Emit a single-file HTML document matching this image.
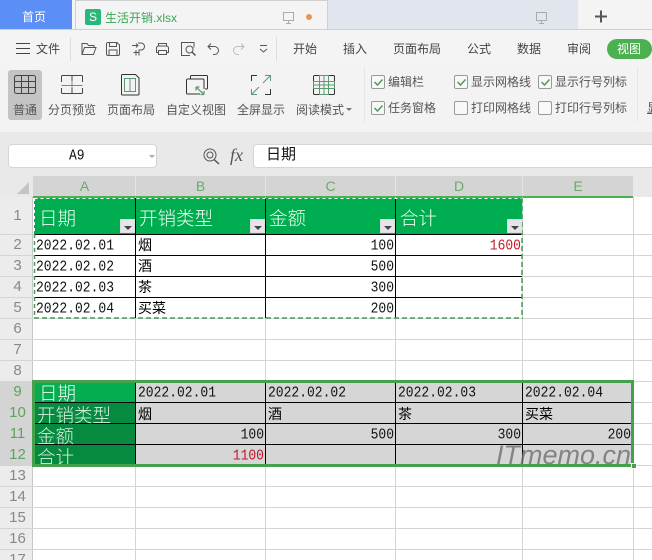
<!DOCTYPE html>
<html><head><meta charset="utf-8">
<style>
*{box-sizing:border-box;margin:0;padding:0}
html,body{width:652px;height:560px;overflow:hidden;background:#fff}
body{position:relative;font-family:"Liberation Sans","Noto Sans CJK SC",sans-serif}
.a{position:absolute}
.t{position:absolute;white-space:nowrap;font-size:12px;line-height:16px;color:#555}
.c{position:absolute;white-space:nowrap;font-family:"Liberation Mono","Noto Serif CJK SC",monospace;font-size:13px;line-height:18px;color:#111;transform:scaleY(1.15)}
.cj{font-size:14px;font-family:"Noto Sans CJK SC",sans-serif;font-weight:400;line-height:18px;color:#000;transform:none}
.r{text-align:right}
.h{position:absolute;white-space:nowrap;font-family:"Noto Sans CJK SC",sans-serif;font-weight:300;font-size:18.500px;line-height:22px;color:#f0fff4}
.col{position:absolute;top:178px;font-size:14px;line-height:16px;color:#6aa96a;text-align:center;padding-left:1px}
.row{position:absolute;left:0;width:33px;text-align:center;padding-left:2px;font-size:15px;line-height:18px;color:#888}
.g{color:#5aa55a}
.cb{position:absolute;width:14px;height:14px;border:1px solid #999;border-radius:2px;background:#f8f8f8}
.f{position:absolute;width:15px;height:14px;background:#e4e4ea;border:1px solid #ddd}
.f:after{content:"";position:absolute;left:3px;top:6px;border:4px solid transparent;border-top:4px solid #444;border-bottom:0}
svg{position:absolute;overflow:visible}
</style></head><body>

<!-- tab bar -->
<div class="a" style="left:0;top:0;width:652px;height:30px;background:#e1e5ee"></div>
<div class="a" style="left:0;top:0;width:72px;height:30px;background:#5b8ff5"></div>
<div class="a" style="left:72px;top:0;width:3px;height:30px;background:#f4f4f4"></div>
<div class="t" style="left:22px;top:9px;color:#fff;font-size:12px">首页</div>
<div class="a" style="left:75px;top:0;width:253px;height:30px;background:#f4f4f4;border:1px solid #cfcfcf;border-bottom:0"></div>
<div class="a" style="left:85px;top:9px;width:16px;height:16px;background:#2bb77c;border-radius:2px;color:#fff;font-size:12px;line-height:16px;text-align:center">S</div>
<div class="t" style="left:105px;top:10px;color:#3aa655;font-size:12px">生活开销.xlsx</div>
<svg style="left:282px;top:11px" width="16" height="14" fill="none" stroke="#aaa" stroke-width="1"><rect x="1.5" y="1.5" width="10" height="8"/><path d="M6.500 9.500v2.500M4 12.500h5"/></svg>
<div class="a" style="left:306px;top:14px;width:6px;height:6px;border-radius:50%;background:#e8984e"></div>
<div class="a" style="left:578px;top:0;width:74px;height:30px;background:#f4f4f4"></div>
<svg style="left:535px;top:11px" width="16" height="14" fill="none" stroke="#aaa" stroke-width="1"><rect x="1.500" y="1.500" width="10" height="8"/><path d="M6.500 9.500v2.500M4 12.500h5"/></svg>
<svg style="left:595px;top:10px" width="13" height="13" stroke="#555" stroke-width="2"><path d="M0 6.500h12M6 .5v12"/></svg>

<!-- menu row + ribbon -->
<div class="a" style="left:0;top:29px;width:652px;height:38px;background:#f4f4f4;border-top:1px solid #cfcfd4"></div>
<div class="a" style="left:0;top:67px;width:652px;height:65px;background:#f3f3f3"></div>
<svg style="left:16px;top:43px" width="14" height="11" stroke="#444" stroke-width="1"><path d="M0 .500h14M0 5.500h14M0 10.500h14"/></svg>
<div class="t" style="left:36px;top:41px;color:#444">文件</div>
<div class="a" style="left:70px;top:37px;width:1px;height:24px;background:#ddd"></div>
<svg style="left:81px;top:42px" width="16" height="14" fill="none" stroke="#555"><path d="M1 12.500V1.500h5l1.500 2H13v2M1 12.500l2.500-7H15l-2.500 7z"/></svg>
<svg style="left:106px;top:42px" width="14" height="14" fill="none" stroke="#555"><path d="M.5 2a1.500 1.500 0 0 1 1.500-1.500h9l2.500 2.500v9a1.500 1.500 0 0 1-1.500 1.500H2A1.500 1.500 0 0 1 .5 12zM3.500 1v3.500h7V1M3 13.500V8h8v5.500"/></svg>
<svg style="left:131px;top:42px" width="15" height="14" fill="none" stroke="#555"><path d="M1 3.500h5M5 1.500l2 2-2 2M7 1h3a3.500 3.500 0 0 1 0 7H8v5.500M5 8v5.500M2.500 10.500h5"/></svg>
<svg style="left:155px;top:42px" width="15" height="14" fill="none" stroke="#555"><path d="M3.500 4V1.500h8V4M3.500 10.500H1.500V6a2 2 0 0 1 2-2h8a2 2 0 0 1 2 2v4.500h-2M3.500 8.500h8v4h-8z"/></svg>
<svg style="left:181px;top:42px" width="16" height="14" fill="none" stroke="#555"><path d="M9 13.500H.5V.5H13v5"/><circle cx="8.500" cy="7.500" r="3.500"/><path d="M11 10l3.500 3.500" stroke-width="1.500"/></svg>
<svg style="left:207px;top:43px" width="13" height="12" fill="none" stroke="#555"><path d="M4 .5L1 3.500l3 3M1 3.500h6.500a4 4 0 0 1 0 8H6"/></svg>
<svg style="left:232px;top:43px" width="13" height="12" fill="none" stroke="#bbb"><path d="M9 .5l3 3-3 3M12 3.500H5.500a4 4 0 0 0 0 8H7"/></svg>
<svg style="left:259px;top:45px" width="9" height="9" fill="none" stroke="#555"><path d="M1 .500h7M1 4l3.500 3L8 4"/></svg>
<div class="a" style="left:276px;top:37px;width:1px;height:24px;background:#ddd"></div>
<div class="t" style="left:293px;top:41px;color:#444">开始</div>
<div class="t" style="left:343px;top:41px;color:#444">插入</div>
<div class="t" style="left:393px;top:41px;color:#444">页面布局</div>
<div class="t" style="left:467px;top:41px;color:#444">公式</div>
<div class="t" style="left:517px;top:41px;color:#444">数据</div>
<div class="t" style="left:567px;top:41px;color:#444">审阅</div>
<div class="a" style="left:607px;top:39px;width:45px;height:20px;border-radius:10px;background:#4caf50"></div>
<div class="t" style="left:617px;top:41px;color:#fff">视图</div>

<!-- ribbon items -->
<div class="a" style="left:8px;top:70px;width:34px;height:50px;border-radius:3px;background:#c4c4c4"></div>
<svg style="left:14px;top:75px" width="22" height="20" fill="none" stroke="#444"><rect x=".5" y=".5" width="21" height="18" rx="2"/><path d="M.5 6.500h21M.5 12.500h21M7.500 .5v18M14.500 .5v18"/></svg>
<div class="t" style="left:13px;top:102px;color:#555">普通</div>
<svg style="left:61px;top:75px" width="22" height="19" fill="none" stroke="#444"><path d="M.5 7V1.500a1 1 0 0 1 1-1h19a1 1 0 0 1 1 1V7M.5 13v4.500a1 1 0 0 0 1 1h19a1 1 0 0 0 1-1V13M11 .5v6M11 13v5.500"/><path d="M.5 10.500h21M11 7v6" stroke="#5d9a72"/></svg>
<div class="t" style="left:48px;top:102px">分页预览</div>
<svg style="left:121px;top:74px" width="19" height="22" fill="none" stroke="#333"><path d="M.5 1.500a1 1 0 0 1 1-1h13l3.500 3.500v16a1 1 0 0 1-1 1h-15.500a1 1 0 0 1-1-1z"/><path d="M3.500 4.500h11v13h-11zM9 4.500v13" stroke="#5d9a72"/></svg>
<div class="t" style="left:107px;top:102px">页面布局</div>
<svg style="left:186px;top:75px" width="22" height="21" fill="none" stroke="#333"><path d="M4.500 4V1.500a1 1 0 0 1 1-1h15a1 1 0 0 1 1 1V13a1 1 0 0 1-1 1h-1.500"/><path d="M14 19H1.500a1 1 0 0 1-1-1V5a1 1 0 0 1 1-1H17a1 1 0 0 1 1 1v9"/><path d="M10 12l8 7.500M10 12h3.500M10 12v3.500M18 19.500h-3.500M18 19.500V16" stroke="#5d9a72" stroke-width="1.200"/></svg>
<div class="t" style="left:166px;top:102px">自定义视图</div>
<svg style="left:251px;top:75px" width="20" height="20" fill="none"><path d="M.5 6V.5H6M14 19.500h5.500V14" stroke="#333"/><path d="M14 .5h5.500V6M19.500 .5L12 8M1 19l7-7M.5 14v5.500H6" stroke="#5d9a72"/></svg>
<div class="t" style="left:237px;top:102px">全屏显示</div>
<svg style="left:313px;top:75px" width="22" height="20" fill="none" stroke="#333"><path d="M6 .5H1.500a1 1 0 0 0-1 1V6M16 .5h4.500a1 1 0 0 1 1 1V6M6 19.500H1.500a1 1 0 0 1-1-1V14M16 19.500h4.500a1 1 0 0 0 1-1V14"/><path d="M6.500 .5h9v19h-9zM11 .5v19M.5 6.500h21v7H.5zM.5 10h21" stroke="#5d9a72"/></svg>
<div class="t" style="left:296px;top:102px">阅读模式</div>
<div class="a" style="left:346px;top:108px;border:3px solid transparent;border-top:3px solid #777;border-bottom:0"></div>

<div class="a" style="left:364px;top:67px;width:1px;height:55px;background:#e6e6e6"></div>
<div class="cb" style="left:371px;top:75px"></div><svg style="left:374px;top:79px" width="9" height="7" fill="none" stroke="#4d9a63" stroke-width="1.500"><path d="M.5 3l3 3L8.500 .5"/></svg>
<div class="t" style="left:388px;top:74px">编辑栏</div>
<div class="cb" style="left:371px;top:101px"></div><svg style="left:374px;top:105px" width="9" height="7" fill="none" stroke="#4d9a63" stroke-width="1.500"><path d="M.5 3l3 3L8.500 .5"/></svg>
<div class="t" style="left:388px;top:100px">任务窗格</div>
<div class="cb" style="left:454px;top:75px"></div><svg style="left:457px;top:79px" width="9" height="7" fill="none" stroke="#4d9a63" stroke-width="1.500"><path d="M.5 3l3 3L8.500 .5"/></svg>
<div class="t" style="left:471px;top:74px">显示网格线</div>
<div class="cb" style="left:454px;top:101px"></div>
<div class="t" style="left:471px;top:100px">打印网格线</div>
<div class="cb" style="left:538px;top:75px"></div><svg style="left:541px;top:79px" width="9" height="7" fill="none" stroke="#4d9a63" stroke-width="1.500"><path d="M.5 3l3 3L8.500 .5"/></svg>
<div class="t" style="left:555px;top:74px">显示行号列标</div>
<div class="cb" style="left:538px;top:101px"></div>
<div class="t" style="left:555px;top:100px">打印行号列标</div>
<div class="a" style="left:637px;top:67px;width:1px;height:55px;background:#e6e6e6"></div>
<div class="t" style="left:647px;top:100px;text-decoration:underline">显</div>

<!-- formula bar -->
<div class="a" style="left:0;top:132px;width:652px;height:44px;background:#e9e9e9"></div>
<div class="a" style="left:8px;top:144px;width:149px;height:24px;background:#fff;border:1px solid #d5d5d5;border-radius:4px"></div>
<div class="c" style="left:69px;top:147px;font-size:13px">A9</div>
<div class="a" style="left:149px;top:155px;border:3px solid transparent;border-top:3px solid #aaa;border-bottom:0"></div>
<svg style="left:203px;top:148px" width="17" height="17" fill="none" stroke="#555"><circle cx="7" cy="7" r="6"/><circle cx="7" cy="7" r="3"/><path d="M11 11.500l5 4.500" stroke-width="1.500"/></svg>
<div class="a" style="left:230px;top:146px;font-family:'Liberation Serif',serif;font-style:italic;font-size:18px;line-height:18px;color:#555">fx</div>
<div class="a" style="left:253px;top:144px;width:399px;height:24px;background:#fff;border:1px solid #d5d5d5;border-right:0;border-radius:4px 0 0 4px"></div>
<div class="a" style="left:266px;top:145px;font-size:15px;line-height:18px;color:#111;font-family:'Noto Sans CJK SC',sans-serif;font-weight:400">日期</div>

<!-- column headers -->
<div class="a" style="left:0;top:176px;width:652px;height:21px;background:#e9e9e9"></div>
<div class="a" style="left:33px;top:176px;width:600px;height:21px;background:#d4d4d4"></div>
<svg style="left:17px;top:182px" width="12" height="12"><path d="M12 0v12H0z" fill="#c4c4c4"/></svg>
<div class="a" style="left:135px;top:176px;width:1px;height:21px;background:#e4e4e4"></div>
<div class="a" style="left:265px;top:176px;width:1px;height:21px;background:#e4e4e4"></div>
<div class="a" style="left:395px;top:176px;width:1px;height:21px;background:#e4e4e4"></div>
<div class="a" style="left:522px;top:176px;width:1px;height:21px;background:#e4e4e4"></div>
<div class="col" style="left:33px;width:102px">A</div>
<div class="col" style="left:135px;width:130px">B</div>
<div class="col" style="left:265px;width:130px">C</div>
<div class="col" style="left:395px;width:127px">D</div>
<div class="col" style="left:522px;width:111px">E</div>
<div class="a" style="left:33px;top:196px;width:600px;height:2px;background:#4caf50"></div>

<!-- row headers -->
<div class="a" style="left:0;top:197px;width:33px;height:363px;background:#ececec;border-right:1px solid #c8c8c8"></div>
<div class="a" style="left:0;top:381px;width:33px;height:85px;background:#d4d4d4"></div>
<div class="row" style="top:207px">1</div>
<div class="row" style="top:236px">2</div>
<div class="row" style="top:257px">3</div>
<div class="row" style="top:278px">4</div>
<div class="row" style="top:299px">5</div>
<div class="row" style="top:320px">6</div>
<div class="row" style="top:341px">7</div>
<div class="row" style="top:362px">8</div>
<div class="row g" style="top:383px">9</div>
<div class="row g" style="top:404px">10</div>
<div class="row g" style="top:425px">11</div>
<div class="row g" style="top:446px">12</div>
<div class="row" style="top:467px">13</div>
<div class="row" style="top:488px">14</div>
<div class="row" style="top:509px">15</div>
<div class="row" style="top:530px">16</div>
<div class="row" style="top:551px">17</div>

<!-- grid -->
<svg style="left:0;top:0" width="652" height="560" stroke="#d4d4d4" stroke-width="1">
<path d="M135.500 197v363M265.500 197v363M395.500 197v363M522.500 197v363M633.500 197v363M0 234.500h652M0 255.500h652M0 276.500h652M0 297.500h652M0 318.500h652M0 339.500h652M0 360.500h652M0 381.500h652M0 402.500h652M0 423.500h652M0 444.500h652M0 465.500h652M0 486.500h652M0 507.500h652M0 528.500h652M0 549.500h652"/>
</svg>

<!-- table 1 -->
<div class="a" style="left:34px;top:198px;width:488px;height:36px;background:#00ac50"></div>
<svg style="left:0;top:0" width="652" height="560" stroke="#000" stroke-width="1" fill="none">
<path d="M135.500 198v120M265.500 198v120M395.500 198v120M34 234.500h488M34 255.500h488M34 276.500h488M34 297.500h488"/>
</svg>
<svg style="left:0;top:0" width="652" height="560" fill="none">
<path d="M34.500 198.500h488" stroke="#fff" stroke-dasharray="3 3"/>
<path d="M34.500 198v36" stroke="#fff" stroke-dasharray="3 3"/>
<path d="M34.500 234v84" stroke="#4a9a56" stroke-width="1.500" stroke-dasharray="4 3"/>
<path d="M34 318h489" stroke="#4a9a56" stroke-width="1.500" stroke-dasharray="5 3"/>
<path d="M522 198v120" stroke="#4a9a56" stroke-width="1.500" stroke-dasharray="5 3"/>
</svg>
<div class="h" style="left:39px;top:207px">日期</div>
<div class="h" style="left:139px;top:207px">开销类型</div>
<div class="h" style="left:269px;top:207px">金额</div>
<div class="h" style="left:400px;top:207px">合计</div>
<div class="f" style="left:120px;top:219px"></div>
<div class="f" style="left:250px;top:219px"></div>
<div class="f" style="left:380px;top:219px"></div>
<div class="f" style="left:507px;top:219px"></div>
<div class="c" style="left:36px;top:237px">2022.02.01</div>
<div class="c" style="left:36px;top:258px">2022.02.02</div>
<div class="c" style="left:36px;top:279px">2022.02.03</div>
<div class="c" style="left:36px;top:300px">2022.02.04</div>
<div class="c cj" style="left:138px;top:236px">烟</div>
<div class="c cj" style="left:138px;top:257px">酒</div>
<div class="c cj" style="left:138px;top:278px">茶</div>
<div class="c cj" style="left:138px;top:299px">买菜</div>
<div class="c r" style="left:295px;width:99px;top:237px">100</div>
<div class="c r" style="left:295px;width:99px;top:258px">500</div>
<div class="c r" style="left:295px;width:99px;top:279px">300</div>
<div class="c r" style="left:295px;width:99px;top:300px">200</div>
<div class="c r" style="left:420px;width:101px;top:237px;color:#c0182a">1600</div>

<!-- table 2 -->
<div class="a" style="left:34px;top:382px;width:599px;height:84px;background:#d6d6d6"></div>
<div class="a" style="left:34px;top:382px;width:101px;height:21px;background:#04ad50"></div>
<div class="a" style="left:34px;top:403px;width:101px;height:62px;background:#068a40"></div>
<svg style="left:0;top:0" width="652" height="560" stroke="#000" stroke-width="1" fill="none">
<path d="M135.500 382v84M265.500 382v84M395.500 382v84M522.500 382v84M34 402.500h598M34 423.500h598M34 444.500h598"/>
</svg>
<div class="h" style="left:39px;top:382px">日期</div>
<div class="h" style="left:37px;top:404px;color:#d8f0de">开销类型</div>
<div class="h" style="left:37px;top:425px;color:#d8f0de">金额</div>
<div class="h" style="left:37px;top:446px;color:#d8f0de">合计</div>
<div class="c" style="left:138px;top:384px">2022.02.01</div>
<div class="c" style="left:268px;top:384px">2022.02.02</div>
<div class="c" style="left:398px;top:384px">2022.02.03</div>
<div class="c" style="left:525px;top:384px">2022.02.04</div>
<div class="c cj" style="left:138px;top:405px">烟</div>
<div class="c cj" style="left:268px;top:405px">酒</div>
<div class="c cj" style="left:398px;top:405px">茶</div>
<div class="c cj" style="left:525px;top:405px">买菜</div>
<div class="c r" style="left:164px;width:100px;top:426px">100</div>
<div class="c r" style="left:294px;width:100px;top:426px">500</div>
<div class="c r" style="left:421px;width:100px;top:426px">300</div>
<div class="c r" style="left:531px;width:100px;top:426px">200</div>
<div class="c r" style="left:164px;width:100px;top:447px;color:#c0182a">1100</div>
<div class="a" style="left:32px;top:380px;width:602px;height:87px;border:3px solid #44a24c"></div>
<div class="a" style="left:631px;top:463px;width:6px;height:6px;background:#44a24c;border:1px solid #fff"></div>

<!-- watermark -->
<div class="a" style="left:496px;top:438px;font-family:'Liberation Sans',sans-serif;font-style:italic;font-size:27px;line-height:34px;color:rgba(110,110,110,.8);white-space:nowrap">ITmemo.cn</div>
</body></html>
